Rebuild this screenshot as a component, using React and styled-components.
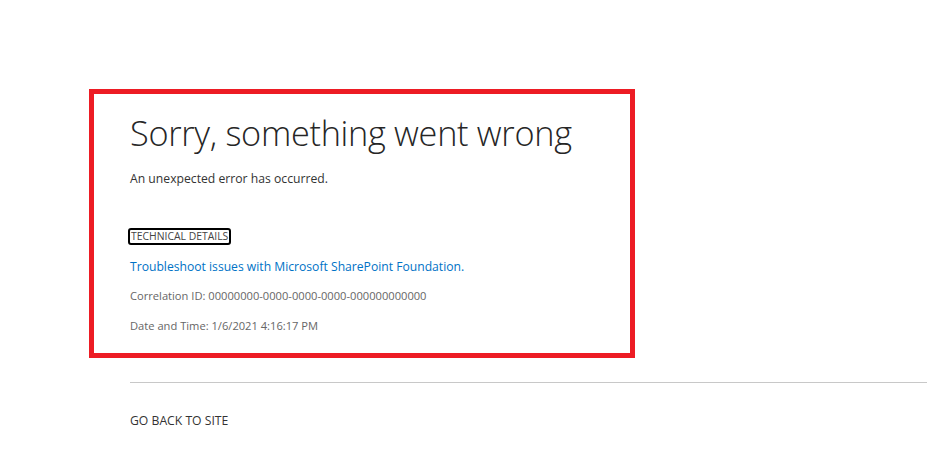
import React from "react";
import styled, { createGlobalStyle } from "styled-components";

const Global = createGlobalStyle`
  html, body { margin: 0; padding: 0; background: #fff; }
  body { font-family: "Open Sans", "Noto Sans", sans-serif; color: #333; }
`;

const Page = styled.div`
  width: 927px;
  height: 459px;
  overflow: hidden;
  padding-top: 89px;
  box-sizing: border-box;
`;

const Highlight = styled.section`
  margin-left: 89px;
  width: 546px;
  height: 269px;
  box-sizing: border-box;
  border: 5px solid #ed1c24;
  padding: 17px 0 0 36px;
  display: flex;
  flex-direction: column;
  align-items: flex-start;
`;

const Title = styled.h1`
  margin: 0;
  font-family: "Open Sans", sans-serif;
  font-weight: 300;
  font-size: 34.3px;
  line-height: 44px;
  color: #262626;
  letter-spacing: -0.3px;
`;

const Message = styled.p`
  margin: 15px 0 0;
  font-size: 12.2px;
  line-height: 18px;
  color: #333;
`;

const DetailsToggle = styled.button`
  margin: 40px 0 0 -2px;
  padding: 0 1px;
  font-family: "Open Sans", sans-serif;
  font-size: 10.4px;
  line-height: 13px;
  color: #444;
  background: none;
  border: 2px solid #000;
  border-radius: 3px;
  text-transform: uppercase;
`;

const HelpLink = styled.a`
  margin-top: 13px;
  font-size: 12.15px;
  line-height: 18px;
  color: #0072c6;
  text-decoration: none;
`;

const Detail = styled.p`
  margin: ${(p) => p.$gap}px 0 0;
  font-size: 11.15px;
  line-height: 16px;
  color: #666;
`;

const Footer = styled.div`
  margin: 24px 0 0 130px;
`;

const Rule = styled.hr`
  margin: 0;
  border: none;
  border-top: 1px solid #c8c8c8;
`;

const BackLink = styled.a`
  display: inline-block;
  margin-top: 30px;
  font-size: 12.2px;
  line-height: 16px;
  color: #333;
  text-decoration: none;
  text-transform: uppercase;
`;

export default function App() {
  return (
    <>
      <Global />
      <Page>
        <Highlight>
          <Title>Sorry, something went wrong</Title>
          <Message>An unexpected error has occurred.</Message>
          <DetailsToggle>Technical Details</DetailsToggle>
          <HelpLink href="#">Troubleshoot issues with Microsoft SharePoint Foundation.</HelpLink>
          <Detail $gap={12}>Correlation ID: 00000000-0000-0000-0000-000000000000</Detail>
          <Detail $gap={14}>Date and Time: 1/6/2021 4:16:17 PM</Detail>
        </Highlight>
        <Footer>
          <Rule />
          <BackLink href="#">Go back to site</BackLink>
        </Footer>
      </Page>
    </>
  );
}
